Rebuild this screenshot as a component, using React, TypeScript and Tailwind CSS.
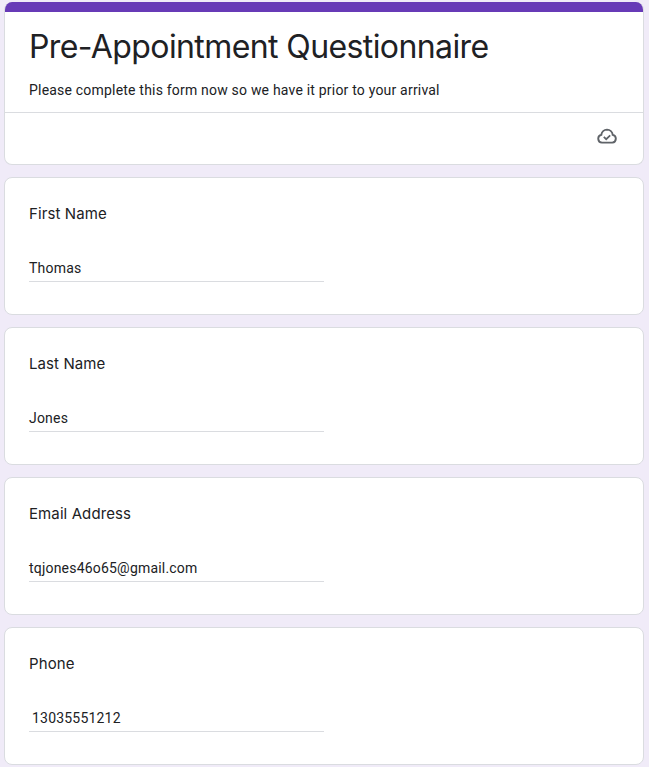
const questions = [
  { label: "First Name", value: "Thomas" },
  { label: "Last Name", value: "Jones" },
  { label: "Email Address", value: "tqjones46o65@gmail.com" },
  { label: "Phone", value: "13035551212", indent: true },
]

function CloudCheck() {
  return (
    <svg width="20" height="18" viewBox="0 0 20 18" fill="none" stroke="#5f6368" strokeWidth="1.9">
      <path d="M5 15.6a3.9 3.9 0 0 1-.7-7.7A6 6 0 0 1 10 2.6a5.8 5.8 0 0 1 5.7 5.3 3.9 3.9 0 0 1-.4 7.7Z" />
      <path d="M6.8 9.8l2.4 2.4 4-3.8" strokeWidth="1.7" />
    </svg>
  )
}

export default function App() {
  return (
    <div className="min-h-[767px] bg-[#f0ebf8] px-1 pt-0.5 pb-0.5 font-['Roboto',sans-serif]">
      <div className="flex w-[640px] flex-col gap-3">
        <div className="overflow-hidden rounded-lg border border-[#dadce0] bg-white border-t-0">
          <div className="-mx-px h-2.5 bg-[#673ab7]" />
          <div className="px-6 pt-[15px] pb-3 border-b border-[#dadce0]">
            <h1 className="font-['Inter',sans-serif] text-[32px] leading-10 tracking-[-0.6px] font-normal text-[#202124]">
              Pre-Appointment Questionnaire
            </h1>
            <p className="mt-[13px] text-sm leading-5 tracking-[0.2px] text-[#202124]">
              Please complete this form now so we have it prior to your arrival
            </p>
          </div>
          <div className="flex h-[51px] items-center justify-end pr-[26px] pb-[6px]">
            <CloudCheck />
          </div>
        </div>

        {questions.map((q) => (
          <div key={q.label} className="h-[138px] rounded-lg border border-[#dadce0] bg-white px-6 pt-[26px]">
            <div className="font-['Inter',sans-serif] text-[15px] leading-5 tracking-[0.1px] text-[#202124]">{q.label}</div>
            <div className="mt-[34px] w-[295px] border-b border-[#dadce0] pb-[3px] text-sm leading-5 tracking-[0.2px] text-[#202124]">
              <span className={q.indent ? "pl-[3px]" : ""}>{q.value}</span>
            </div>
          </div>
        ))}
      </div>
    </div>
  )
}
